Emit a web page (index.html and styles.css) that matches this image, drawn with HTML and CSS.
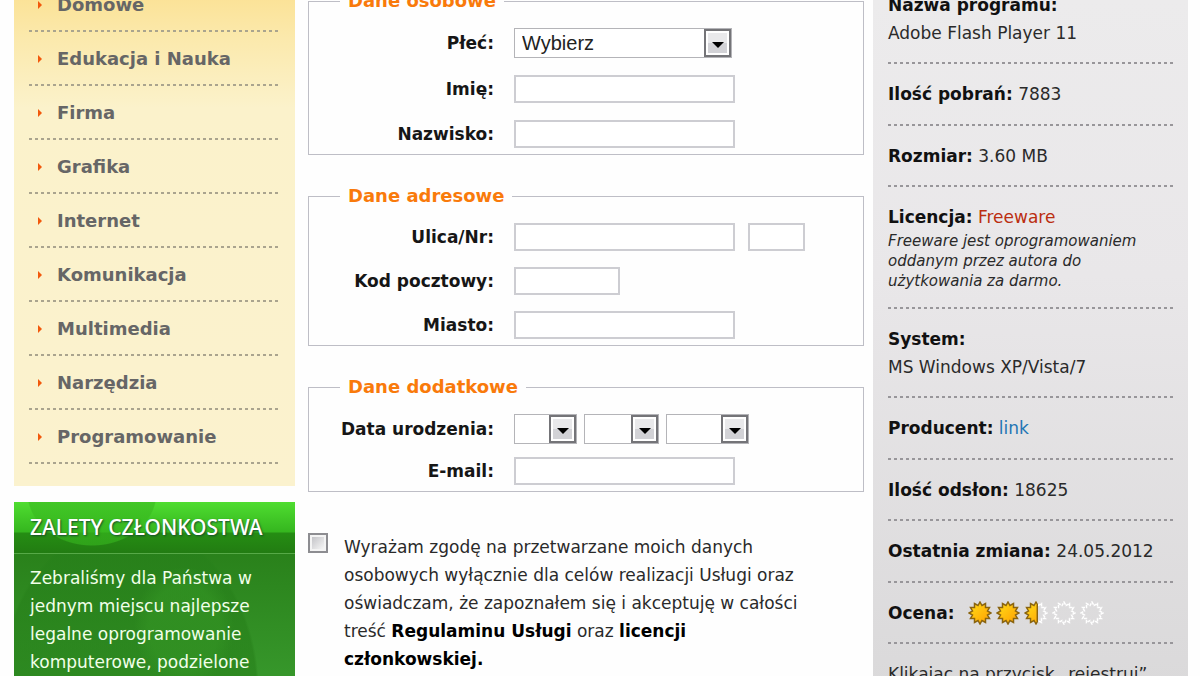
FILE: index.html
```html
<!DOCTYPE html>
<html lang="pl">
<head>
<meta charset="utf-8">
<title>Rejestracja</title>
<link rel="stylesheet" href="styles.css">
</head>
<body>
<svg class="defs" width="0" height="0" aria-hidden="true">
  <defs>
    <linearGradient id="gold" x1="0" y1="0" x2="1" y2="1">
      <stop offset="0" stop-color="#ffdf1a"/><stop offset="1" stop-color="#ff9c00"/>
    </linearGradient>
    <path id="sun" d="M12 1 14 4.500 17.500 2.500 17.500 6.500 21.500 6.500 19.500 10 23 12 19.500 14 21.500 17.500 17.500 17.500 17.500 21.500 14 19.500 12 23 10 19.500 6.500 21.500 6.500 17.500 2.500 17.500 4.500 14 1 12 4.500 10 2.500 6.500 6.500 6.500 6.500 2.500 10 4.500Z"/>
    <clipPath id="left"><rect x="0" y="0" width="14" height="24"/></clipPath>
  </defs>
</svg>
<div class="page">
  <aside class="sidebar">
    <ul class="menu">
      <li><a href="#">Domowe</a></li>
      <li><a href="#">Edukacja i Nauka</a></li>
      <li><a href="#">Firma</a></li>
      <li><a href="#">Grafika</a></li>
      <li><a href="#">Internet</a></li>
      <li><a href="#">Komunikacja</a></li>
      <li><a href="#">Multimedia</a></li>
      <li><a href="#">Narzędzia</a></li>
      <li><a href="#">Programowanie</a></li>
    </ul>
    <section class="benefits">
      <h2>ZALETY CZŁONKOSTWA</h2>
      <p>Zebraliśmy dla Państwa w jednym miejscu najlepsze legalne oprogramowanie komputerowe, podzielone</p>
    </section>
  </aside>

  <form class="form">
    <fieldset class="group loose">
      <legend>Dane osobowe</legend>
      <div class="row"><label for="plec">Płeć:</label><select id="plec" class="select-wide"><option>Wybierz</option></select></div>
      <div class="row"><label for="imie">Imię:</label><input id="imie" type="text"></div>
      <div class="row"><label for="nazwisko">Nazwisko:</label><input id="nazwisko" type="text"></div>
    </fieldset>
    <fieldset class="group">
      <legend>Dane adresowe</legend>
      <div class="row"><label for="ulica">Ulica/Nr:</label><input id="ulica" type="text"><input class="number" type="text" aria-label="Nr"></div>
      <div class="row"><label for="kod">Kod pocztowy:</label><input id="kod" class="postcode" type="text"></div>
      <div class="row"><label for="miasto">Miasto:</label><input id="miasto" type="text"></div>
    </fieldset>
    <fieldset class="group compact">
      <legend>Dane dodatkowe</legend>
      <div class="row dates"><label for="dzien">Data urodzenia:</label><select id="dzien" class="day"><option></option></select><select class="month" aria-label="Miesiąc"><option></option></select><select class="year" aria-label="Rok"><option></option></select></div>
      <div class="row"><label for="email">E-mail:</label><input id="email" type="text"></div>
    </fieldset>
    <div class="consent">
      <input id="zgoda" type="checkbox">
      <label for="zgoda">Wyrażam zgodę na przetwarzane moich danych osobowych wyłącznie dla celów realizacji Usługi oraz oświadczam, że zapoznałem się i akceptuję w całości treść <b>Regulaminu Usługi</b> oraz <b>licencji członkowskiej.</b></label>
    </div>
  </form>

  <aside class="info">
    <ul class="facts">
      <li><b>Nazwa programu:</b><br>Adobe Flash Player 11</li>
      <li><b>Ilość pobrań:</b> 7883</li>
      <li><b>Rozmiar:</b> 3.60 MB</li>
      <li><b>Licencja:</b> <a class="license" href="#">Freeware</a><em>Freeware jest oprogramowaniem oddanym przez autora do użytkowania za darmo.</em></li>
      <li><b>System:</b><br>MS Windows XP/Vista/7</li>
      <li><b>Producent:</b> <a class="link" href="#">link</a></li>
      <li><b>Ilość odsłon:</b> 18625</li>
      <li><b>Ostatnia zmiana:</b> 24.05.2012</li>
      <li class="rating"><b>Ocena:</b>
        <span class="stars">
          <svg class="full" viewBox="0 0 24 24"><use href="#sun"/></svg>
          <svg class="full" viewBox="0 0 24 24"><use href="#sun"/></svg>
          <svg viewBox="0 0 24 24"><use class="empty" href="#sun"/><g class="half" clip-path="url(#left)"><use href="#sun"/><path d="M13.300 4V20"/></g></svg>
          <svg class="empty" viewBox="0 0 24 24"><use href="#sun"/></svg>
          <svg class="empty" viewBox="0 0 24 24"><use href="#sun"/></svg>
        </span>
      </li>
    </ul>
    <p class="note">Klikając na przycisk „rejestruj”</p>
  </aside>
</div>
</body>
</html>
```
FILE: styles.css
```css
* { box-sizing: border-box; }
body {
  margin: 0;
  background: #fefefe;
  color: #2a2a2a;
  font: 17px/28px Verdana, "DejaVu Sans", sans-serif;
}
a { text-decoration: none; }
ul, h2, p { margin: 0; padding: 0; list-style: none; }
.defs { position: absolute; }

.page {
  display: grid;
  grid-template-columns: 281px minmax(0, 1fr) 315px;
  height: 100vh;
  padding: 0 12px 0 14px;
  overflow: hidden;
}

.sidebar { display: flex; flex-direction: column; gap: 16px; }
.menu {
  margin-top: -22px;
  padding: 0 16px 22px 15px;
  background: linear-gradient(#fbdf8d, #fbe9ac 60px, #fbf2cb 130px, #fbf2ce);
}
.menu li, .facts li {
  background: repeating-linear-gradient(90deg, #aaa48e 0 3px, transparent 3px 6px) bottom / 100% 2px no-repeat;
}
.menu a {
  display: flex;
  align-items: center;
  gap: 15px;
  height: 54px;
  padding-left: 9px;
  color: #666;
  font-size: 18px;
  font-weight: bold;
}
.menu a::before {
  content: "";
  border: solid transparent;
  border-width: 4px 0 4px 4px;
  border-left-color: #f2590c;
}

.benefits {
  flex: 1;
  background:
    radial-gradient(ellipse 50px 60px at 170px 125px, #34952499 70%, transparent),
    radial-gradient(ellipse 130px 170px at 115px 190px, #27801a99 98%, transparent),
    linear-gradient(#247814, #36962a 170px);
  color: #f1ffe9;
}
.benefits h2 {
  padding: 0 16px;
  border-bottom: 1px solid #56a947;
  background:
    radial-gradient(ellipse 65px 53px at 78px -9px, #38b81f99 98%, transparent),
    linear-gradient(#4fdd30, #35b61f 30px, #258d13 31px, #227c12);
  color: #fff;
  font: 500 21px/51px "Noto Sans", sans-serif;
  text-shadow: 1px 1px 2px #174b2e;
  white-space: nowrap;
}
.benefits p { padding: 10px 16px 0; }

.form { margin: -11px 9px 0 13px; }
.group {
  display: flex;
  flex-direction: column;
  gap: 16px;
  min-width: 0;
  margin: 0 0 29px;
  padding: 15px 0 6px;
  border: 1px solid #bebec6;
}
.group.loose { gap: 17px; }
.group.compact { gap: 13px; }
legend {
  margin-left: 31px;
  padding: 0 8px;
  color: #f97a0b;
  font-size: 18px;
  font-weight: bold;
  line-height: 24px;
}
.row { display: flex; align-items: center; }
.row label {
  width: 185px;
  margin-right: 20px;
  color: #161616;
  font-weight: bold;
  text-align: right;
}
input[type="text"] {
  width: 221px;
  height: 28px;
  padding: 0 6px;
  border: 2px solid #cdcdd2;
  background: #fff;
  font: inherit;
}
input.number { width: 57px; margin-left: 13px; }
input.postcode { width: 106px; }
select {
  height: 30px;
  margin: 0;
  padding: 0 28px 0 7px;
  appearance: none;
  border: 1px solid #b4b4b8;
  border-radius: 0;
  background: #fff url("data:image/svg+xml,%3Csvg xmlns='http://www.w3.org/2000/svg' width='27' height='28'%3E%3Crect x='1' y='1' width='25' height='26' fill='%23fff' stroke='%23747478' stroke-width='2'/%3E%3Cpath fill='%23e9e9eb' d='M4 4h19v10H4z'/%3E%3Cpath fill='%23d2d2d6' d='M4 14h19v10H4z'/%3E%3Cpath d='M8 13h12l-6 6z'/%3E%3C/svg%3E") right center / 27px 28px no-repeat;
  color: #222;
  font: 20px/28px "Liberation Sans", Arial, sans-serif;
}
.select-wide { width: 218px; }
.dates select { margin-right: 7px; }
.day { width: 63px; }
.month { width: 75px; }
.year { width: 83px; }

.consent { display: flex; gap: 16px; padding-top: 12px; }
.consent input {
  flex: none;
  width: 20px;
  height: 20px;
  margin: 0;
  appearance: none;
  border: 2px solid #8d8d91;
  background: linear-gradient(135deg, #c4c4c8, #f6f6f6) content-box, #f4f4f4;
  padding: 2px;
}
.consent label { max-width: 480px; }
.consent b { color: #000; }

.info {
  padding: 0 15px;
  background: linear-gradient(#ecebec, #e9e7e9 40%, #dad9da);
}
.facts { margin-top: -25px; }
.facts li {
  padding: 16px 0 18px;
  background-image: repeating-linear-gradient(90deg, #98969a 0 3px, transparent 3px 6px);
}
.facts li:nth-child(odd) { padding-bottom: 17px; }
.facts b { color: #111; }
.facts em { display: block; font-size: 15px; line-height: 20px; }
.license { color: #bb2e10; }
.link { color: #2275b4; }
.rating { display: flex; align-items: center; }
.stars { display: flex; gap: 4px; margin-left: 14px; }
.stars svg { width: 24px; height: 24px; }
.full, .half { fill: url(#gold); stroke: #8a6410; stroke-width: 1.500; }
.empty { fill: none; stroke: #fff; stroke-width: 1.500; stroke-dasharray: 3 1; }
.note { padding-top: 16px; white-space: nowrap; }
```
